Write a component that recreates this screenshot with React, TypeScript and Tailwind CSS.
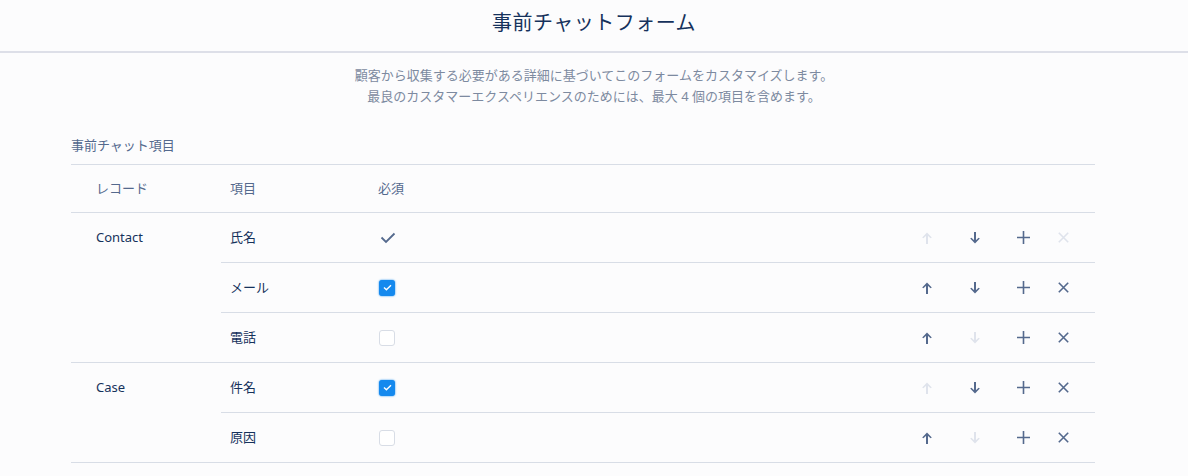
type Field = {
  label: string;
  required: "fixed" | "on" | "off";
  up: boolean;
  down: boolean;
  remove: boolean;
};

type Group = {
  record: string;
  fields: Field[];
};

const groups: Group[] = [
  {
    record: "Contact",
    fields: [
      { label: "氏名", required: "fixed", up: false, down: true, remove: false },
      { label: "メール", required: "on", up: true, down: true, remove: true },
      { label: "電話", required: "off", up: true, down: false, remove: true },
    ],
  },
  {
    record: "Case",
    fields: [
      { label: "件名", required: "on", up: false, down: true, remove: true },
      { label: "原因", required: "off", up: true, down: false, remove: true },
    ],
  },
];

const font = {
  fontFamily: '"Noto Sans", "Noto Sans CJK JP", sans-serif',
};

function ArrowIcon({ dir, enabled }: { dir: "up" | "down"; enabled: boolean }) {
  return (
    <svg
      width="12"
      height="14"
      viewBox="0 0 12 14"
      className={enabled ? "text-[#54698d]" : "text-[#dfe3ec]"}
      style={{ transform: dir === "down" ? "rotate(180deg)" : undefined }}
      aria-hidden="true"
    >
      <path d="M6 4V13" stroke="currentColor" strokeWidth="2" />
      <path d="M6 1.5L10.8 6.5L9.6 7.3L6 4L2.4 7.3L1.2 6.5Z" fill="currentColor" />
    </svg>
  );
}

function PlusIcon() {
  return (
    <svg width="13" height="13" viewBox="0 0 13 13" className="text-[#54698d]" aria-hidden="true">
      <path d="M6.5 0V13M0 6.5H13" stroke="currentColor" strokeWidth="1.6" />
    </svg>
  );
}

function CloseIcon({ enabled }: { enabled: boolean }) {
  return (
    <svg
      width="11"
      height="11"
      viewBox="0 0 11 11"
      className={enabled ? "text-[#54698d]" : "text-[#dfe3ec]"}
      aria-hidden="true"
    >
      <path d="M0.8 0.8L10.2 10.2M10.2 0.8L0.8 10.2" stroke="currentColor" strokeWidth="1.6" />
    </svg>
  );
}

function RequiredCell({ state }: { state: Field["required"] }) {
  if (state === "fixed") {
    return (
      <svg width="16" height="12" viewBox="0 0 16 12" className="ml-px text-[#54698d]" aria-hidden="true">
        <path d="M1.5 5.5L6 10L14.5 1.5" fill="none" stroke="currentColor" strokeWidth="1.8" />
      </svg>
    );
  }
  if (state === "on") {
    return (
      <span className="flex size-4 items-center justify-center rounded-[3px] bg-[#1589ee] shadow-[0_0_2px_#1589ee]">
        <svg width="9" height="7" viewBox="0 0 9 7" aria-hidden="true">
          <path d="M1 3.5L3.4 5.8L8 1.2" fill="none" stroke="white" strokeWidth="1.4" />
        </svg>
      </span>
    );
  }
  return <span className="block size-4 rounded-[3px] border border-[#d8dde6] bg-white" />;
}

function FieldRow({ field, last }: { field: Field; last: boolean }) {
  return (
    <div
      className={`flex items-center ${last ? "h-[49px]" : "h-[50px] border-b border-[#d8dde6]"}`}
    >
      <div className="w-[148px] pl-[9px] text-[13px] text-[#16325c]">{field.label}</div>
      <div className="flex w-[160px] items-center pl-[10px]">
        <RequiredCell state={field.required} />
      </div>
      <div className="ml-auto flex items-center pr-[16px]">
        <span className="flex w-12 justify-center">
          <ArrowIcon dir="up" enabled={field.up} />
        </span>
        <span className="flex w-12 justify-center">
          <ArrowIcon dir="down" enabled={field.down} />
        </span>
        <span className="flex w-12 justify-center">
          <PlusIcon />
        </span>
        <span className="flex w-8 justify-center">
          <CloseIcon enabled={field.remove} />
        </span>
      </div>
    </div>
  );
}

export default function App() {
  return (
    <div className="min-h-[476px] w-full bg-[#fcfcfd]" style={font}>
      <header className="flex h-[53px] items-center justify-center border-b-2 border-[#dddfe8] pb-[6px]">
        <h1 className="text-[20px] tracking-[0.5px] text-[#16325c]">事前チャットフォーム</h1>
      </header>

      <p className="mt-[12px] text-center text-[13px] leading-[21px] text-[#7d8aa0]">
        顧客から収集する必要がある詳細に基づいてこのフォームをカスタマイズします。
        <br />
        最良のカスタマーエクスペリエンスのためには、最大 4 個の項目を含めます。
      </p>

      <section className="ml-[71px] mr-[93px] mt-[28px]">
        <h2 className="pb-[9px] text-[13px] leading-[20px] text-[#54698d]">事前チャット項目</h2>

        <div className="flex h-[49px] items-center border-y border-[#d8dde6] text-[13px] text-[#54698d]">
          <div className="w-[150px] pl-[25px]">レコード</div>
          <div className="w-[148px] pl-[9px]">項目</div>
          <div className="pl-[9px]">必須</div>
        </div>

        {groups.map((group) => (
          <div key={group.record} className="flex border-b border-[#d8dde6]">
            <div className="w-[150px] pl-[25px] pt-[15px] text-[13px] leading-[18px] text-[#16325c]">
              {group.record}
            </div>
            <div className="flex-1">
              {group.fields.map((field, i) => (
                <FieldRow key={field.label} field={field} last={i === group.fields.length - 1} />
              ))}
            </div>
          </div>
        ))}
      </section>
    </div>
  );
}
